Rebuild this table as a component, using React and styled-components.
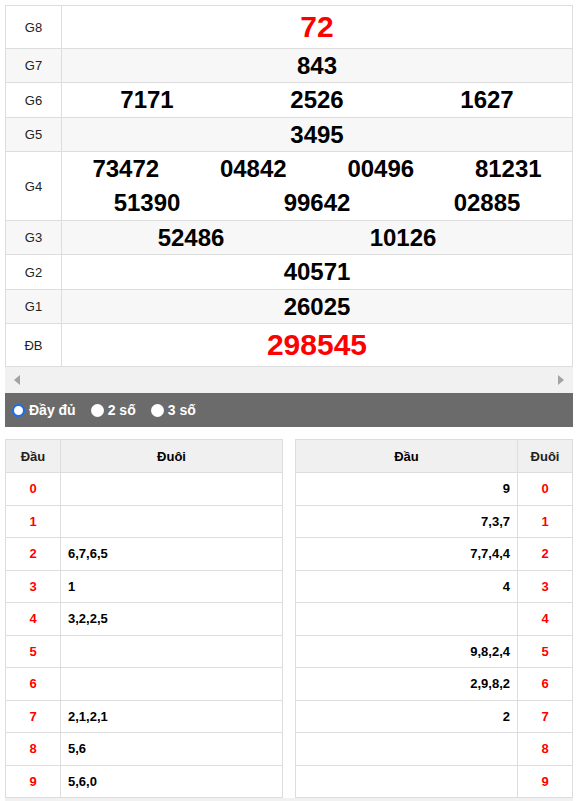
import React from "react";
import styled, { createGlobalStyle } from "styled-components";

const GlobalStyle = createGlobalStyle`
  html, body { margin: 0; padding: 0; background: #fff; }
  body { font-family: "Liberation Sans", Arial, Helvetica, sans-serif; color: #222; }
  * { box-sizing: content-box; }
`;

const Page = styled.div`
  padding: 5px 5px 0;
  width: 568px;
`;

const Board = styled.div`
  border: 1px solid #ddd;
  border-bottom: none;
`;

const Row = styled.div`
  display: flex;
  height: ${(p) => p.$h}px;
  border-bottom: 1px solid #ddd;
  background: ${(p) => (p.$alt ? "#f7f7f7" : "#fff")};
`;

const Label = styled.div`
  width: 55px;
  flex: none;
  border-right: 1px solid #ddd;
  display: flex;
  align-items: center;
  justify-content: center;
  font-size: 13px;
  color: #222;
`;

const Cell = styled.div`
  flex: 1;
  display: flex;
  flex-direction: column;
  justify-content: center;
`;

const Line = styled.div`
  display: flex;
  align-items: center;
  height: ${(p) => (p.$multi ? "34px" : "auto")};
  padding: ${(p) => p.$pad || "0"};
`;

const Num = styled.span`
  flex: 1;
  text-align: center;
  font-weight: bold;
  font-size: ${(p) => (p.$big ? "30px" : "24px")};
  line-height: 1;
  color: ${(p) => (p.$red ? "#f00" : "#000")};
`;

const ScrollTrack = styled.div`
  height: 26px;
  background: #f1f1f1;
  display: flex;
  align-items: center;
  justify-content: space-between;
  padding: 0 9px;
`;

const Arrow = styled.span`
  width: 0;
  height: 0;
  border-top: 5px solid transparent;
  border-bottom: 5px solid transparent;
  ${(p) =>
    p.$dir === "left"
      ? "border-right: 6px solid #a3a3a3;"
      : "border-left: 6px solid #a3a3a3;"}
`;

const RadioBar = styled.div`
  height: 34px;
  background: #6b6b6b;
  display: flex;
  align-items: center;
  padding-left: 7px;
  gap: 15px;
`;

const RadioItem = styled.label`
  display: flex;
  align-items: center;
  gap: 4px;
  color: #fff;
  font-weight: bold;
  font-size: 14px;
`;

const Dot = styled.span`
  width: ${(p) => (p.$on ? "9px" : "13px")};
  height: ${(p) => (p.$on ? "9px" : "13px")};
  border-radius: 50%;
  background: #fff;
  border: ${(p) => (p.$on ? "2px solid #1a6ff2" : "none")};
`;

const Split = styled.div`
  display: flex;
  gap: 12px;
  margin-top: 12px;
`;

const Table = styled.div`
  flex: 1;
  border: 1px solid #ddd;
  border-bottom: none;
`;

const TRow = styled.div`
  display: flex;
  height: ${(p) => (p.$head ? 32 : 31.5)}px;
  border-bottom: 1px solid #ddd;
  background: ${(p) => (p.$head ? "#f0f0f0" : "#fff")};
  font-size: 13px;
  font-weight: bold;
`;

const KeyCell = styled.div`
  width: 54px;
  flex: none;
  display: flex;
  align-items: center;
  justify-content: center;
  ${(p) => (p.$side === "left" ? "border-right: 1px solid #ddd;" : "border-left: 1px solid #ddd;")}
  color: ${(p) => (p.$red ? "#f00" : "#222")};
`;

const ValCell = styled.div`
  flex: 1;
  display: flex;
  align-items: center;
  justify-content: ${(p) => p.$align};
  padding: 0 7px;
  color: #000;
`;

const BottomBar = styled.div`
  height: 17px;
  background: #f1f1f1;
`;

const prizes = [
  { k: "G8", h: 42, lines: [["72"]], big: true, red: true },
  { k: "G7", h: 33, alt: true, lines: [["843"]] },
  { k: "G6", h: 34, lines: [["7171", "2526", "1627"]] },
  { k: "G5", h: 33, alt: true, lines: [["3495"]] },
  { k: "G4", h: 68, lines: [["73472", "04842", "00496", "81231"], ["51390", "99642", "02885"]] },
  { k: "G3", h: 33, alt: true, lines: [["52486", "10126"]], pad: "0 63px 0 23px" },
  { k: "G2", h: 34, lines: [["40571"]] },
  { k: "G1", h: 33, alt: true, lines: [["26025"]] },
  { k: "ĐB", h: 42, lines: [["298545"]], big: true, red: true },
];

const dau = ["", "", "6,7,6,5", "1", "3,2,2,5", "", "", "2,1,2,1", "5,6", "5,6,0"];
const duoi = ["9", "7,3,7", "7,7,4,4", "4", "", "9,8,2,4", "2,9,8,2", "2", "", ""];

export default function App() {
  return (
    <>
      <GlobalStyle />
      <Page>
        <Board>
          {prizes.map((p) => (
            <Row key={p.k} $h={p.h} $alt={p.alt}>
              <Label>{p.k}</Label>
              <Cell>
                {p.lines.map((line, i) => (
                  <Line key={i} $pad={p.pad} $multi={p.lines.length > 1}>
                    {line.map((n) => (
                      <Num key={n} $big={p.big} $red={p.red}>
                        {n}
                      </Num>
                    ))}
                  </Line>
                ))}
              </Cell>
            </Row>
          ))}
        </Board>
        <ScrollTrack>
          <Arrow $dir="left" />
          <Arrow $dir="right" />
        </ScrollTrack>
        <RadioBar>
          <RadioItem>
            <Dot $on />
            Đầy đủ
          </RadioItem>
          <RadioItem>
            <Dot />2 số
          </RadioItem>
          <RadioItem>
            <Dot />3 số
          </RadioItem>
        </RadioBar>
        <Split>
          <Table>
            <TRow $head>
              <KeyCell $side="left">Đầu</KeyCell>
              <ValCell $align="center">Đuôi</ValCell>
            </TRow>
            {dau.map((v, i) => (
              <TRow key={i}>
                <KeyCell $side="left" $red>
                  {i}
                </KeyCell>
                <ValCell $align="flex-start">{v}</ValCell>
              </TRow>
            ))}
          </Table>
          <Table>
            <TRow $head>
              <ValCell $align="center">Đầu</ValCell>
              <KeyCell $side="right">Đuôi</KeyCell>
            </TRow>
            {duoi.map((v, i) => (
              <TRow key={i}>
                <ValCell $align="flex-end">{v}</ValCell>
                <KeyCell $side="right" $red>
                  {i}
                </KeyCell>
              </TRow>
            ))}
          </Table>
        </Split>
        <BottomBar />
      </Page>
    </>
  );
}
